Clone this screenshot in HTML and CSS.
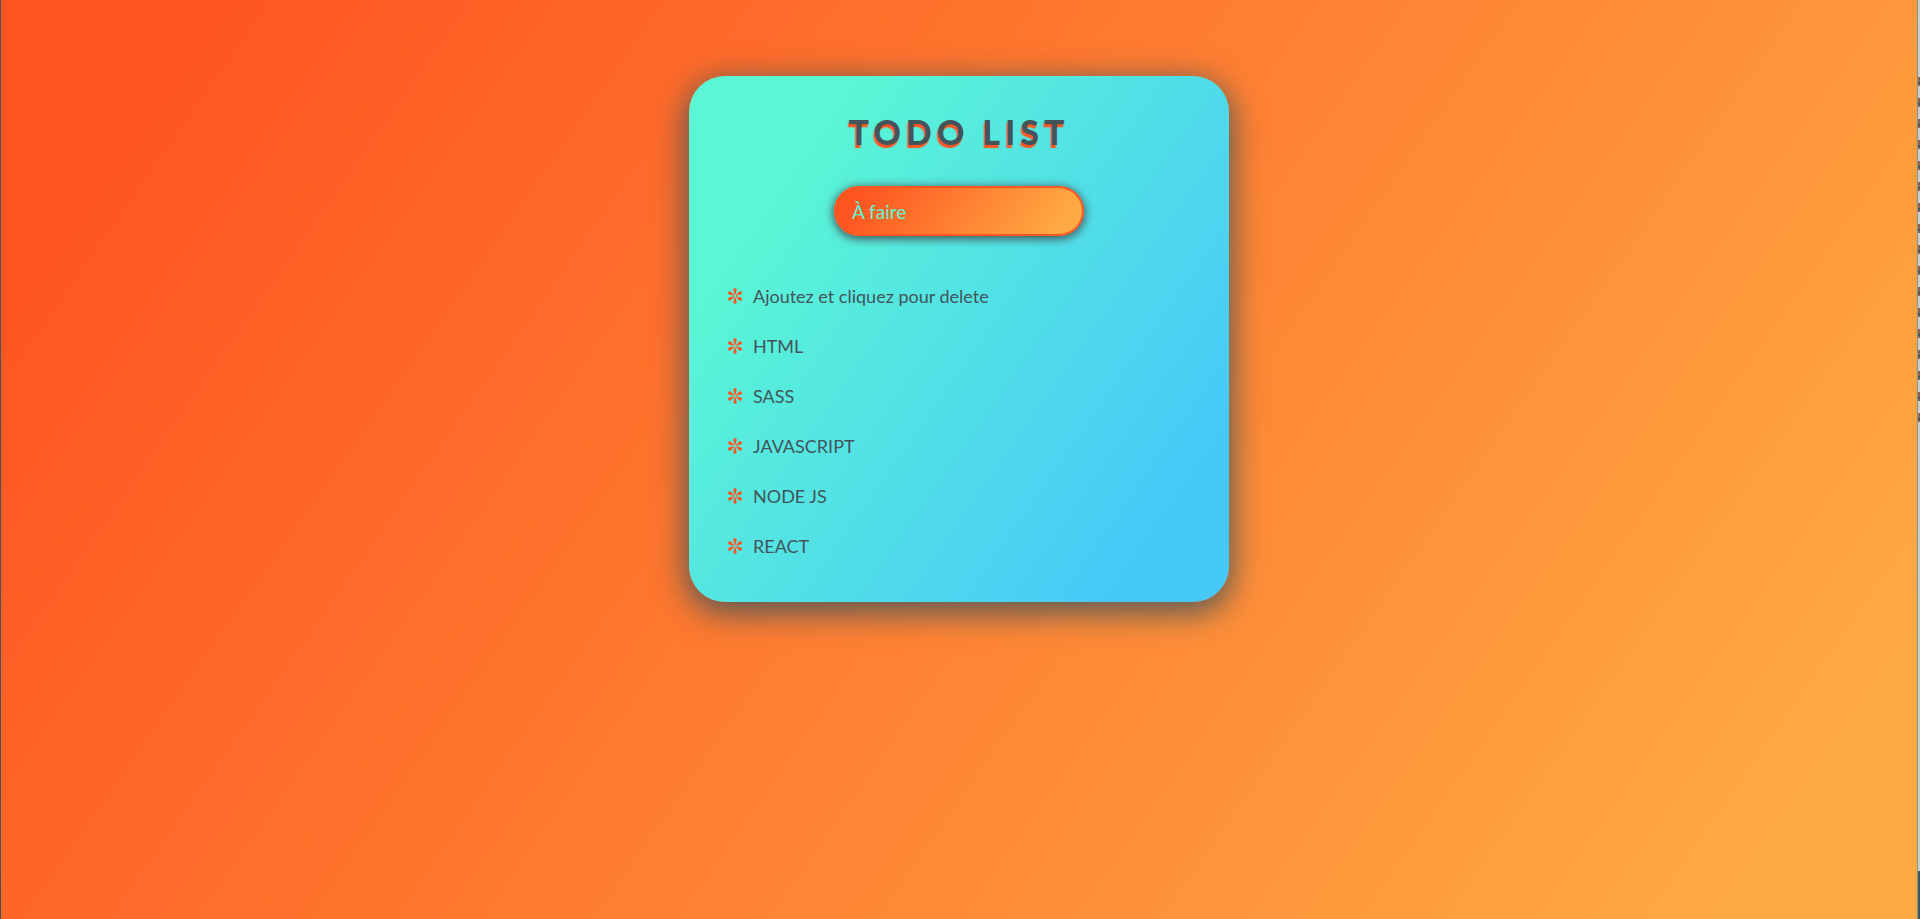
FILE: index.html
```html
<!DOCTYPE html>
<html lang="fr">
<head>
<meta charset="utf-8">
<meta name="viewport" content="width=device-width, initial-scale=1">
<title>Todo list</title>
<link rel="stylesheet" href="styles.css">
</head>
<body>
<svg class="sprite" aria-hidden="true">
  <symbol id="asterisk" viewBox="-8 -8 16 16">
    <g id="petals">
      <path id="petal" d="M-.4-1-1.6-6C-1.9-8.3 1.9-8.3 1.6-6L.4-1Z"/>
      <use href="#petal" transform="rotate(60)"/>
      <use href="#petal" transform="rotate(120)"/>
      <use href="#petal" transform="rotate(180)"/>
      <use href="#petal" transform="rotate(240)"/>
      <use href="#petal" transform="rotate(300)"/>
    </g>
  </symbol>
</svg>
<main class="page">
  <section class="card">
    <h1 class="title">TODO LIST</h1>
    <form class="form">
      <input class="field" type="text" placeholder="À faire" aria-label="À faire">
    </form>
    <ul class="list">
      <li class="item"><svg class="bullet" aria-hidden="true"><use href="#asterisk"/></svg>Ajoutez et cliquez pour delete</li>
      <li class="item"><svg class="bullet" aria-hidden="true"><use href="#asterisk"/></svg>HTML</li>
      <li class="item"><svg class="bullet" aria-hidden="true"><use href="#asterisk"/></svg>SASS</li>
      <li class="item"><svg class="bullet" aria-hidden="true"><use href="#asterisk"/></svg>JAVASCRIPT</li>
      <li class="item"><svg class="bullet" aria-hidden="true"><use href="#asterisk"/></svg>NODE JS</li>
      <li class="item"><svg class="bullet" aria-hidden="true"><use href="#asterisk"/></svg>REACT</li>
    </ul>
  </section>
</main>
<aside class="edge" aria-hidden="true">
  <div class="edge-marks"></div>
  <div class="edge-foot"></div>
</aside>
</body>
</html>
```
FILE: styles.css
```css
:root {
  --dark: #43545b;
  --orange: #ff5520;
  --amber: #ffa943;
  --mint: #5bf7d4;
  --sky: #47c9f8;
}

* {
  box-sizing: border-box;
}

body {
  margin: 0;
  min-height: 100vh;
  display: flex;
  font-family: Lato, "Open Sans", sans-serif;
  color: var(--dark);
}

.sprite {
  position: absolute;
  width: 0;
  height: 0;
}

.page {
  flex: 1;
  padding: 76px 16px;
  border-left: 1px solid var(--dark);
  background: linear-gradient(125deg, var(--orange) 8%, var(--amber) 92%);
}

.card {
  max-width: 540px;
  margin: 0 auto;
  padding: 32px 38px 31px;
  border-radius: 36px;
  background: linear-gradient(125deg, var(--mint) 17%, var(--sky) 86%);
  box-shadow: 0 8px 32px 3px rgba(67, 84, 91, 0.9);
}

.title {
  margin: 0;
  font-size: 34px;
  line-height: 48px;
  font-weight: 900;
  letter-spacing: 5px;
  text-align: center;
  text-shadow: -1px 3px 1px var(--orange);
}

.form {
  display: flex;
  justify-content: center;
  margin: 30px 0 35px;
}

.field {
  width: 250px;
  height: 50px;
  padding: 0 16px;
  border: 2px solid var(--orange);
  border-radius: 25px;
  background: linear-gradient(125deg, var(--orange) 10%, var(--amber) 90%);
  box-shadow: 0 2px 10px 1px var(--dark);
  font: inherit;
  font-size: 19px;
  color: var(--mint);
  outline: none;
}

.field::placeholder {
  color: var(--mint);
  opacity: 1;
}

.list {
  margin: 0;
  padding: 0;
  list-style: none;
}

.item {
  display: flex;
  align-items: center;
  gap: 10px;
  height: 50px;
  font-size: 18px;
}

.bullet {
  width: 16px;
  height: 16px;
  fill: var(--orange);
}

.edge {
  display: flex;
  flex-direction: column;
  width: 3px;
  border-left: 1px solid #7d9b8b;
  background: #cccccc;
}

.edge-marks {
  height: 347px;
  margin-top: 77px;
  background: repeating-linear-gradient(#8a6350 0 5px, var(--dark) 5px 7px, #8a6350 7px 9px, #cccccc 9px 21px);
}

.edge-foot {
  height: 48px;
  margin-top: auto;
  background: var(--dark);
}
```
